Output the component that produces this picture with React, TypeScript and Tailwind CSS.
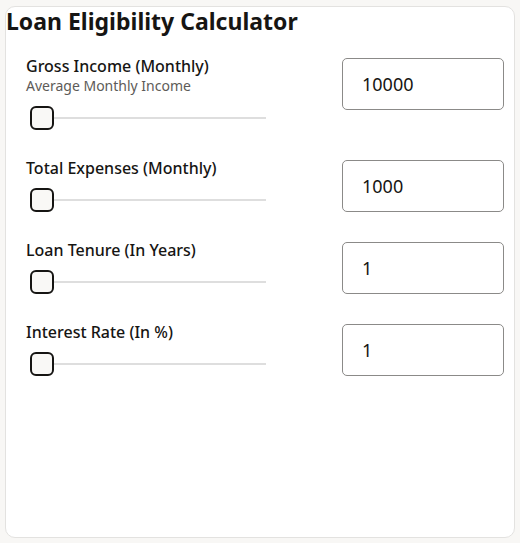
const fields = [
  { label: "Gross Income (Monthly)", hint: "Average Monthly Income", value: "10000" },
  { label: "Total Expenses (Monthly)", value: "1000" },
  { label: "Loan Tenure (In Years)", value: "1" },
  { label: "Interest Rate (In %)", value: "1" },
];

function Slider() {
  return (
    <div className="mt-[10px] flex w-[240px] items-center pl-1">
      <div className="h-6 w-6 shrink-0 rounded-[6px] border-2 border-[#161513] bg-[#f9f8f6]" />
      <div className="h-[2px] flex-1 bg-[#dedede]" />
    </div>
  );
}

export default function App() {
  return (
    <div
      className="min-h-[543px] bg-[#f8f7f5] px-[5px] pt-[6px] pb-[5px]"
      style={{ fontFamily: '"Noto Sans", "Open Sans", sans-serif' }}
    >
      <div className="h-[532px] rounded-[10px] border border-[#e3e2e0] bg-white">
        <h1 className="text-[23px] font-bold leading-[28px] text-[#161513]">
          Loan Eligibility Calculator
        </h1>
        <div className="mt-[23px] flex flex-col gap-[30px] pl-5 pr-[10px]">
          {fields.map((f) => (
            <div key={f.label} className="flex items-start justify-between">
              <div className="-mt-0.5 flex flex-col">
                <span className="text-[16px] font-medium leading-5 text-[#161513]">
                  {f.label}
                </span>
                {f.hint && (
                  <span className="text-[14px] leading-5 text-[#5d5b58]">{f.hint}</span>
                )}
                <Slider />
              </div>
              <input
                readOnly
                value={f.value}
                className="h-[52px] w-[162px] rounded-[5px] border border-[#8b8a88] bg-white pl-[19px] text-[18px] text-[#161513] outline-none"
              />
            </div>
          ))}
        </div>
      </div>
    </div>
  );
}
